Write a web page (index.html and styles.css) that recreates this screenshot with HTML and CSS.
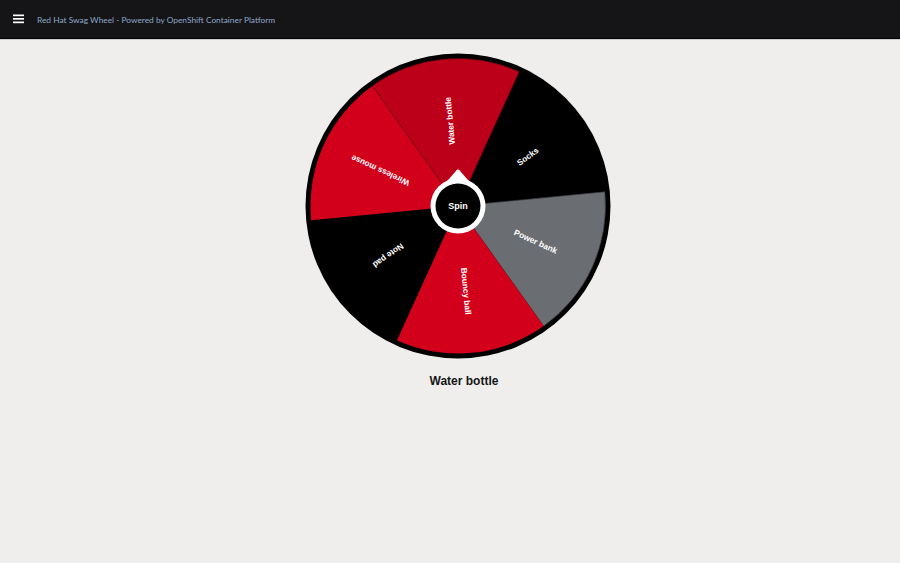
FILE: index.html
```html
<!DOCTYPE html>
<html lang="en">
<head>
<meta charset="utf-8">
<title>Red Hat Swag Wheel</title>
<link rel="stylesheet" href="styles.css">
</head>
<body>
<header class="masthead">
  <button class="menu-toggle" aria-label="Menu">
    <svg width="12" height="10" viewBox="0 0 12 10"><rect x="0" y="0.5" width="11" height="1.7" fill="#fff"/><rect x="0" y="4" width="11" height="1.7" fill="#fff"/><rect x="0" y="7.5" width="11" height="1.7" fill="#fff"/></svg>
  </button>
  <span class="brand">Red Hat Swag Wheel - Powered by OpenShift Container Platform</span>
</header>
<main class="content">
  <svg class="wheel" width="314" height="314" viewBox="0 0 314 314">
    <circle cx="157" cy="157" r="152.5" fill="#000"/>
    <g class="seg" transform="rotate(54.5 157 157)">
      <path d="M157 157 L83.25 29.26 A147.5 147.5 0 0 1 230.75 29.26 Z" fill="#000"/>
      <text transform="translate(157 71.5) rotate(-90)">Socks</text>
    </g>
    <g class="seg" transform="rotate(114.5 157 157)">
      <path d="M157 157 L83.25 29.26 A147.5 147.5 0 0 1 230.75 29.26 Z" fill="#6a6e73" stroke="#3a3a3c" stroke-width="0.6"/>
      <text transform="translate(157 71.5) rotate(-90)">Power bank</text>
    </g>
    <g class="seg" transform="rotate(174.5 157 157)">
      <path d="M157 157 L83.25 29.26 A147.5 147.5 0 0 1 230.75 29.26 Z" fill="#d2001b"/>
      <text transform="translate(157 71.5) rotate(-90)">Bouncy ball</text>
    </g>
    <g class="seg" transform="rotate(234.5 157 157)">
      <path d="M157 157 L83.25 29.26 A147.5 147.5 0 0 1 230.75 29.26 Z" fill="#000"/>
      <text transform="translate(157 71.5) rotate(-90)">Note pad</text>
    </g>
    <g class="seg" transform="rotate(294.5 157 157)">
      <path d="M157 157 L83.25 29.26 A147.5 147.5 0 0 1 230.75 29.26 Z" fill="#d2001b"/>
      <text transform="translate(157 71.5) rotate(-90)">Wireless mouse</text>
    </g>
    <g class="seg" transform="rotate(354.5 157 157)">
      <path d="M157 157 L83.25 29.26 A147.5 147.5 0 0 1 230.75 29.26 Z" fill="#bd0019" stroke="#6a0010" stroke-width="0.6"/>
      <text transform="translate(157 71.5) rotate(-90)">Water bottle</text>
    </g>
    <path d="M157 120.5 Q158 120 159.5 122.5 L173 138 L141 138 L154.5 122.5 Q156 120 157 120.5 Z" fill="#fff"/>
    <circle cx="157" cy="157" r="27.5" fill="#fff"/>
    <circle cx="157" cy="157" r="22.5" fill="#000"/>
    <text class="spin" x="157" y="157">Spin</text>
  </svg>
  <div class="result">Water bottle</div>
</main>
</body>
</html>
```
FILE: styles.css
```css
html, body {
  margin: 0;
  padding: 0;
}
body {
  background: #efeeed;
  font-family: "Liberation Sans", Arial, sans-serif;
  height: 563px;
  overflow: hidden;
}
.masthead {
  height: 38px;
  background: #151417;
  border-bottom: 1px solid #000;
  box-shadow: 0 1px 0 #cfcdd0;
  display: flex;
  align-items: center;
  padding-left: 13px;
  box-sizing: content-box;
}
.menu-toggle {
  background: none;
  border: 0;
  padding: 0;
  margin: 0 12px 0 0;
  width: 12px;
  height: 10px;
  display: flex;
  cursor: pointer;
}
.brand {
  color: #8ea8c8;
  font-family: Lato, "Liberation Sans", sans-serif;
  font-size: 8.35px;
  padding-top: 1px;
}
.content {
  display: flex;
  flex-direction: column;
  align-items: center;
  padding-left: 16px;
  padding-top: 10px;
}
.wheel {
  display: block;
}
.seg text {
  fill: #fff;
  font-family: "Liberation Sans", Arial, sans-serif;
  font-weight: bold;
  font-size: 8.3px;
  text-anchor: middle;
  dominant-baseline: central;
}
.wheel .spin {
  fill: #fff;
  font-family: "Liberation Sans", Arial, sans-serif;
  font-weight: bold;
  font-size: 9px;
  text-anchor: middle;
  dominant-baseline: central;
}
.result {
  margin-top: 11px;
  padding-left: 12px;
  font-size: 12px;
  font-weight: bold;
  color: #151515;
}
```
